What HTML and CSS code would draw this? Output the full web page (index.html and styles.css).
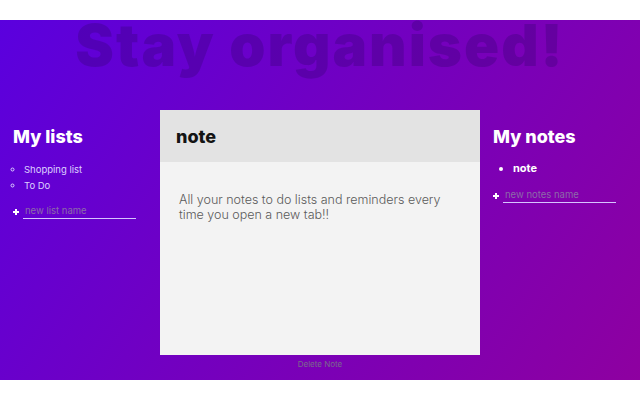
FILE: index.html
```html
<!DOCTYPE html>
<html>
<head>
<meta charset="utf-8">
<title>Stay organised!</title>
<link rel="stylesheet" href="styles.css">
</head>
<body>
<div class="page">
  <h1 class="title">Stay organised!</h1>
  <div class="columns">
    <aside class="side side-left">
      <h2 class="side-title">My lists</h2>
      <ul class="lists">
        <li>Shopping list</li>
        <li>To Do</li>
      </ul>
      <div class="add-row">
        <span class="plus"></span>
        <input class="add-input" type="text" placeholder="new list name">
      </div>
    </aside>
    <main class="center">
      <div class="card">
        <div class="card-head"><h2 class="card-title">note</h2></div>
        <div class="card-body">
          <p class="card-text">All your notes to do lists and reminders every time you open a new tab!!</p>
        </div>
      </div>
      <div class="delete">Delete Note</div>
    </main>
    <aside class="side side-right">
      <h2 class="side-title">My notes</h2>
      <ul class="notes">
        <li>note</li>
      </ul>
      <div class="add-row add-row-notes">
        <span class="plus"></span>
        <input class="add-input" type="text" placeholder="new notes name">
      </div>
    </aside>
  </div>
</div>
</body>
</html>
```

FILE: styles.css
```css
html, body {
  margin: 0;
  padding: 0;
  background: #ffffff;
}
body {
  font-family: "Inter", "Open Sans", sans-serif;
}
.page {
  margin-top: 20px;
  height: 360px;
  background: linear-gradient(125deg, #5a00de 0%, #7400be 50%, #8e00a0 100%);
}
.title {
  margin: 0;
  height: 90px;
  text-align: center;
  font-size: 58px;
  line-height: 50px;
  font-weight: 900;
  letter-spacing: 2px;
  color: rgba(50, 0, 110, 0.3);
}
.columns {
  display: grid;
  grid-template-columns: 160px 320px 160px;
}
.side {
  padding: 16px 0 0 13px;
  color: #ffffff;
}
.side-title {
  margin: 0;
  font-size: 18px;
  line-height: 22px;
  font-weight: 800;
}
.lists {
  margin: 14px 0 0 0;
  padding: 0 0 0 11px;
  list-style: circle;
  color: #ddd0ff;
  font-size: 9.5px;
  line-height: 16px;
}
.notes {
  margin: 12px 0 0 0;
  padding: 0 0 0 20px;
  list-style: disc;
  font-size: 11px;
  line-height: 16px;
  font-weight: 700;
}
.add-row {
  display: flex;
  align-items: center;
  gap: 4px;
  margin-top: 11px;
}
.add-row-notes {
  margin-top: 13px;
}
.plus {
  position: relative;
  width: 6px;
  height: 6px;
  flex: none;
}
.plus::before, .plus::after {
  content: "";
  position: absolute;
  background: #ffffff;
}
.plus::before {
  left: 0; top: 2px; width: 6px; height: 2px;
}
.plus::after {
  left: 2px; top: 0; width: 2px; height: 6px;
}
.add-input {
  width: 111px;
  padding: 0 0 2px 2px;
  border: none;
  border-bottom: 1px solid #d6c4ff;
  background: transparent;
  font-family: inherit;
  font-size: 9.5px;
  color: #ffffff;
  outline: none;
}
.add-input::placeholder {
  color: #8c6aa8;
}
.card {
  height: 245px;
  background: #f3f3f3;
  display: flex;
  flex-direction: column;
}
.card-head {
  height: 52px;
  background: #e3e3e3;
  display: flex;
  align-items: center;
  padding-left: 16px;
}
.card-title {
  margin: 0;
  font-size: 18px;
  font-weight: 800;
  color: #141414;
}
.card-body {
  padding: 30px 30px 0 19px;
}
.card-text {
  margin: 0;
  font-size: 12.5px;
  line-height: 15px;
  font-weight: 300;
  color: #5a5a5a;
}
.delete {
  text-align: center;
  font-size: 8px;
  line-height: 18px;
  color: #7a6a8c;
}
```
